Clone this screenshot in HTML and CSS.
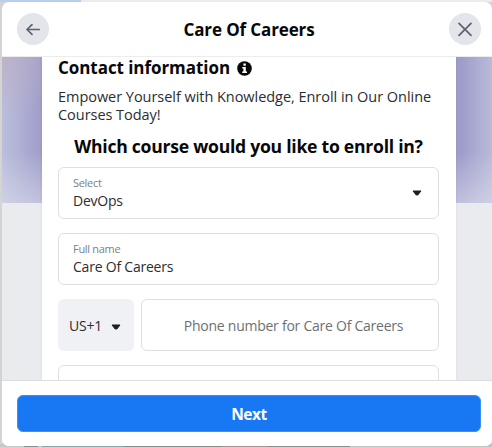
FILE: index.html
```html
<!DOCTYPE html>
<html lang="en">
<head>
  <meta charset="UTF-8" />
  <meta name="viewport" content="width=device-width, initial-scale=1.0" />
  <title>Care Of Careers</title>
  <link rel="stylesheet" href="styles.css">
</head>
<body>

  <div class="modal">
    <!-- Header -->
    <header class="modal-header">
      <button class="round-btn" aria-label="Back">
        <svg width="16" height="16" viewBox="0 0 16 16"><path d="M14.3 8.5H2.2M7 3.7L2 8.5l5 4.8" /></svg>
      </button>
      <h1>Care Of Careers</h1>
      <button class="round-btn" aria-label="Close">
        <svg width="16" height="16" viewBox="0 0 16 16"><path d="M2 2.3l12 12M14 2.3l-12 12" /></svg>
      </button>
    </header>

    <!-- Form -->
    <main class="modal-body">
      <div class="card">
        <h2>Contact information
          <svg class="info" width="15" height="15" viewBox="0 0 15 15">
            <circle cx="7.5" cy="7.5" r="7.3" />
            <path d="M6.4 2.5h2.4v2.2H6.4zM5.3 5.9h3.5v4.5h1.2V12H5.2v-1.6h1.2V7.4H5.3z" />
          </svg>
        </h2>
        <p class="intro">Empower Yourself with Knowledge, Enroll in Our Online<br>Courses Today!</p>
        <h3>Which course would you like to enroll in?</h3>

        <div class="field select">
          <div>
            <label>Select</label>
            <span class="value">DevOps</span>
          </div>
          <svg class="caret" width="10" height="6" viewBox="0 0 10 6"><path d="M1 1h8L5.8 5H4.2z" /></svg>
        </div>

        <div class="field">
          <div>
            <label>Full name</label>
            <span class="value">Care Of Careers</span>
          </div>
        </div>

        <div class="phone-row">
          <div class="country">
            <span>US+1</span>
            <svg class="caret" width="10" height="6" viewBox="0 0 10 6"><path d="M1 1h8L5.8 5H4.2z" /></svg>
          </div>
          <div class="field phone"><span>Phone number for Care Of Careers</span></div>
        </div>

        <div class="field"></div>
      </div>
    </main>

    <!-- Footer -->
    <footer class="modal-footer">
      <button class="next-btn">Next</button>
    </footer>
  </div>

</body>
</html>
```

FILE: styles.css
```css
* {
  box-sizing: border-box;
}

body {
  margin: 0;
  padding: 2px 0 0 2px;
  height: 447px;
  overflow: hidden;
  font-family: "Open Sans", "Noto Sans", sans-serif;
  background:
    linear-gradient(to right, #b9cdf0 81px, #ececec 81px) top / 100% 2px no-repeat,
    linear-gradient(to right, #c8c8c8 24px, #8c8c8c 24px 38px, #c8c8c8 38px 42px, #8ca5aa 42px 124px, #8a8a8a 124px 222px, #b09090 222px 268px, #8c8c8c 268px 350px, #c4c4c4 350px) bottom / 100% 3px no-repeat,
    #d4d4d4;
}

h1, h2, h3, p {
  margin: 0;
}

button {
  border: none;
  padding: 0;
  font-family: inherit;
}

.modal {
  display: flex;
  flex-direction: column;
  height: 444px;
  background: white;
  border-radius: 7px;
  overflow: hidden;
}

.modal-header {
  display: flex;
  align-items: center;
  justify-content: space-between;
  flex: none;
  height: 55px;
  padding: 0 11px 0 15px;
  border-bottom: 1px solid #ececee;
}

.modal-header h1 {
  padding-top: 1px;
  font-size: 17px;
  line-height: 24px;
  letter-spacing: -0.12px;
  color: #080809;
  white-space: nowrap;
}

.round-btn {
  display: flex;
  align-items: center;
  justify-content: center;
  width: 32px;
  height: 32px;
  border-radius: 50%;
  background: #e3e5ea;
}

.round-btn svg {
  fill: none;
  stroke: #5b636c;
  stroke-width: 1.7;
  stroke-linecap: round;
  stroke-linejoin: round;
}

.modal-body {
  flex: 1;
  min-height: 0;
  overflow: hidden;
  padding: 0 36px 0 40px;
  background:
    linear-gradient(to bottom, transparent 65%, rgba(222, 224, 238, 0.55)) top / 100% 146px no-repeat,
    radial-gradient(circle at 0 0, rgba(190, 175, 195, 0.7), transparent 60px) top / 100% 146px no-repeat,
    linear-gradient(to right, #bcbfdc, #9f9dca 40px, #9f9dca 460px, #b9bbd9) top / 100% 146px no-repeat,
    #e9ebef;
}

.card {
  padding: 0 17px 0 16px;
  height: 400px;
  background: white;
  box-shadow: 0 0 3px rgba(0, 0, 0, 0.08);
}

.card h2 {
  display: flex;
  align-items: center;
  gap: 7px;
  font-size: 17px;
  line-height: 22px;
  letter-spacing: -0.06px;
  color: #080809;
  white-space: nowrap;
}

.info {
  fill: #080809;
}

.info path {
  fill: white;
}

.intro {
  margin-top: 9px;
  font-size: 14.5px;
  line-height: 18px;
  letter-spacing: -0.04px;
  color: #2b2d30;
  white-space: nowrap;
}

.card h3 {
  height: 43px;
  padding-top: 9px;
  font-size: 17.6px;
  line-height: 26px;
  letter-spacing: -0.26px;
  text-align: center;
  color: #080809;
  white-space: nowrap;
}

.field {
  display: flex;
  align-items: center;
  height: 52px;
  margin-bottom: 14px;
  padding: 0 14px;
  border: 1px solid #dedfe1;
  border-radius: 6px;
  background: white;
}

.select {
  justify-content: space-between;
  padding-right: 16px;
}

.field label {
  display: block;
  margin-bottom: 1px;
  font-size: 11px;
  line-height: 14px;
  letter-spacing: -0.3px;
  color: #7c7f83;
}

.value {
  display: block;
  font-size: 14px;
  line-height: 20px;
  letter-spacing: -0.22px;
  color: #2b2d30;
}

.caret {
  fill: #1c1e21;
  stroke: #1c1e21;
  stroke-linejoin: round;
}

.phone-row {
  display: flex;
  gap: 7px;
}

.country {
  display: flex;
  align-items: center;
  gap: 9px;
  width: 76px;
  height: 52px;
  padding-left: 11px;
  border-radius: 6px;
  background: #f0f1f5;
  font-size: 14px;
  letter-spacing: -0.2px;
  color: #2b2d30;
}

.country .caret {
  margin-top: 4px;
}

.phone {
  flex: 1;
  justify-content: center;
  padding: 0 10px 0 17px;
  font-size: 14px;
  letter-spacing: -0.25px;
  color: #6d7074;
  white-space: nowrap;
}

.modal-footer {
  flex: none;
  height: 66px;
  padding: 14px 11px 0 15px;
  border-top: 1px solid #dddee0;
  background: white;
}

.next-btn {
  display: block;
  width: 100%;
  height: 37px;
  border: 1px solid #3e8ff5;
  border-radius: 6px;
  background: #1877f2;
  color: white;
  font-size: 15.5px;
  font-weight: 700;
  letter-spacing: -0.5px;
}
```
